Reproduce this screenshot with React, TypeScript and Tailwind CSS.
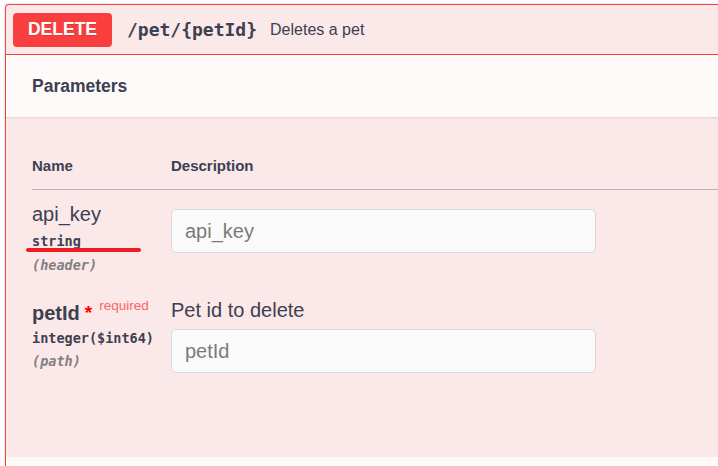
import React from 'react';

const sans = { fontFamily: '"Liberation Sans", Arial, sans-serif' };
const mono = { fontFamily: '"DejaVu Sans Mono", "Liberation Mono", monospace' };

export default function App() {
  return (
    <div className="min-h-screen bg-white overflow-hidden pl-[5px] pt-[4px] text-[#3b4151]" style={sans}>
      <div className="w-[800px] border border-r-0 border-[#f93e3e] rounded-tl-[4px] bg-[#fbe8e8] shadow-[0_0_3px_rgba(0,0,0,0.19)]">
        {/* Summary */}
        <div className="flex items-center h-[50px] px-[7px] border-b border-[#f93e3e]">
          <div className="flex items-center justify-center w-[99px] h-[34px] rounded-[4px] bg-[#f93e3e] text-white font-bold text-[17.5px] [text-shadow:0_1px_0_rgba(0,0,0,0.1)]">
            DELETE
          </div>
          <span className="ml-[15px] font-bold text-[18px]" style={mono}>
            /pet/{'{petId}'}
          </span>
          <span className="ml-[13px] text-[16px]">Deletes a pet</span>
        </div>

        {/* Parameters header */}
        <div className="flex items-center h-[62px] pl-[26px] bg-[#fefafa] shadow-[0_1px_2px_rgba(0,0,0,0.1)]">
          <h4 className="font-bold text-[17.5px]">Parameters</h4>
        </div>

        {/* Table */}
        <div className="pl-[26px] pt-[40px] pb-[84px]">
          <div className="flex border-b border-[#bab4b8] pb-[14px] text-[15px] font-bold leading-[18px]">
            <div className="w-[139px]">Name</div>
            <div>Description</div>
          </div>

          {/* api_key */}
          <div className="flex items-start pt-[12px]">
            <div className="relative w-[139px]">
              <div className="text-[20px] leading-[24px]">api_key</div>
              <div className="mt-[6px] text-[13.5px] leading-[18px] font-bold" style={mono}>string</div>
              <div className="mt-[6px] text-[13.5px] leading-[18px] font-bold italic text-[#808080]" style={mono}>(header)</div>
              <div className="absolute left-[-6px] top-[46px] w-[115px] h-[4px] rounded-full bg-[#ed1c24]" />
            </div>
            <input
              placeholder="api_key"
              className="mt-[7px] w-[425px] h-[44px] px-[13px] rounded-[5px] border border-[#d9d9d9] bg-[#fafafa] text-[20px] outline-none placeholder:text-[#7a7a7a]"
              style={sans}
            />
          </div>

          {/* petId */}
          <div className="flex items-start mt-[24px]">
            <div className="w-[139px] pt-[3px]">
              <div className="flex items-start text-[20px] leading-[24px] font-bold">
                petId
                <span className="ml-[5px] text-[19px] leading-[24px] text-[#ff0000]">*</span>
                <span className="ml-[7px] mt-[-7px] text-[13.5px] font-normal text-[#fd6464]">required</span>
              </div>
              <div className="mt-[4px] text-[13.5px] leading-[18px] font-bold" style={mono}>integer($int64)</div>
              <div className="mt-[5px] text-[13.5px] leading-[18px] font-bold italic text-[#808080]" style={mono}>(path)</div>
            </div>
            <div>
              <div className="text-[20px] leading-[24px]">Pet id to delete</div>
              <input
                placeholder="petId"
                className="mt-[7px] w-[425px] h-[44px] px-[13px] rounded-[5px] border border-[#d9d9d9] bg-[#fafafa] text-[20px] outline-none placeholder:text-[#7a7a7a]"
                style={sans}
              />
            </div>
          </div>
        </div>

        {/* Next section header */}
        <div className="h-[60px] bg-[#fefafa]" />
      </div>
    </div>
  );
}
